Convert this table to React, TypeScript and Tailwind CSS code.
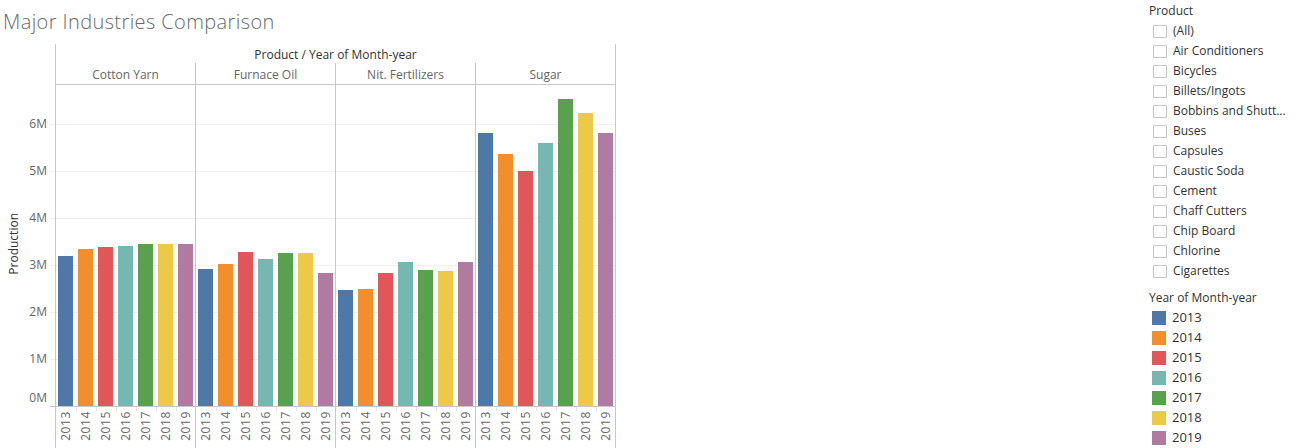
import React from "react";

const years = ["2013", "2014", "2015", "2016", "2017", "2018", "2019"];
const colors = ["#4e79a7", "#f28e2b", "#e15759", "#76b7b2", "#59a14f", "#edc948", "#b07aa1"];

const panels = [
  { name: "Cotton Yarn", h: [150, 157, 159, 160, 162, 162, 162] },
  { name: "Furnace Oil", h: [137, 142, 154, 147, 153, 153, 133] },
  { name: "Nit. Fertilizers", h: [116, 117, 133, 144, 136, 135, 144] },
  { name: "Sugar", h: [273, 252, 235, 263, 307, 293, 273] },
];

const grid = [
  { label: "6M", top: 39 },
  { label: "5M", top: 86 },
  { label: "4M", top: 133 },
  { label: "3M", top: 180 },
  { label: "2M", top: 227 },
  { label: "1M", top: 274 },
];

const products = [
  "(All)",
  "Air Conditioners",
  "Bicycles",
  "Billets/Ingots",
  "Bobbins and Shutt...",
  "Buses",
  "Capsules",
  "Caustic Soda",
  "Cement",
  "Chaff Cutters",
  "Chip Board",
  "Chlorine",
  "Cigarettes",
];

export default function App() {
  return (
    <div className="flex w-[1300px] h-[448px] overflow-hidden bg-white font-['Open_Sans',sans-serif]">
      {/* Chart */}
      <div className="w-[616px] flex flex-col shrink-0">
        <div className="h-[44px] pl-[3px] flex items-center text-[20px] font-light text-[#6a6a6a] tracking-[0.4px]">
          Major Industries Comparison
        </div>

        {/* header title row */}
        <div className="flex h-[19px]">
          <div className="w-[55px] shrink-0" />
          <div className="w-[561px] border-x border-[#c8c8c8] pt-[3px] text-center text-[12px] leading-[16px] text-[#333]">
            Product / Year of Month-year
          </div>
        </div>

        {/* panel headers */}
        <div className="flex h-[22px]">
          <div className="w-[55px] shrink-0" />
          <div className="w-[561px] flex border-r border-b border-[#c8c8c8]">
            {panels.map((p) => (
              <div
                key={p.name}
                className="w-[140px] border-l border-[#c8c8c8] flex items-center justify-center pt-[3px] text-[12px] text-[#666]"
              >
                {p.name}
              </div>
            ))}
          </div>
        </div>

        {/* plot */}
        <div className="relative flex h-[322px]">
          {grid.map((g) => (
            <div
              key={g.label}
              className="absolute left-[50px] right-0 h-px bg-[#f0f0f0]"
              style={{ top: g.top }}
            />
          ))}
          <div className="absolute left-[50px] w-[5px] bottom-0 h-px bg-[#c8c8c8]" />
          <div className="relative w-[55px] shrink-0 text-[12px] text-[#666]">
            {grid.map((g) => (
              <div
                key={g.label}
                className="absolute right-[8px] leading-[16px]"
                style={{ top: g.top - 8 }}
              >
                {g.label}
              </div>
            ))}
            <div className="absolute right-[8px] leading-[16px] top-[305px]">0M</div>
            <div className="absolute left-[6px] top-[128px] text-[12px] text-[#333] leading-[16px] [writing-mode:vertical-rl] rotate-180">
              Production
            </div>
          </div>
          <div className="relative w-[561px] flex border-r border-b border-[#c8c8c8]">
            {panels.map((p) => (
              <div
                key={p.name}
                className="w-[140px] h-full border-l border-[#c8c8c8] flex items-end gap-[5px] pl-[2px]"
              >
                {p.h.map((h, i) => (
                  <div
                    key={i}
                    className="w-[15px] shrink-0"
                    style={{ height: h, backgroundColor: colors[i] }}
                  />
                ))}
              </div>
            ))}
          </div>
        </div>

        {/* year labels */}
        <div className="flex h-[41px]">
          <div className="w-[55px] shrink-0" />
          <div className="w-[561px] flex border-r border-[#c8c8c8]">
            {panels.map((p) => (
              <div key={p.name} className="w-[140px] border-l border-[#c8c8c8] flex">
                {years.map((y, i) => (
                  <div
                    key={y}
                    className={`${i === 6 ? "w-[19px]" : "w-[20px]"} flex flex-col items-center`}
                  >
                    <div
                      className={`self-start h-[4px] w-px ${i === 0 ? "bg-transparent" : "bg-[#e4e4e4]"}`}
                    />
                    <span className="text-[12px] leading-[14px] text-[#666] [writing-mode:vertical-rl] rotate-180 tracking-[0.6px]">
                      {y}
                    </span>
                  </div>
                ))}
              </div>
            ))}
          </div>
        </div>
      </div>

      <div className="flex-1" />

      {/* Right side filters/legend */}
      <div className="w-[151px] shrink-0 flex flex-col text-[12px] text-[#333]">
        <div className="h-[21px] flex items-center">Product</div>
        {products.map((p) => (
          <div key={p} className="h-[20px] flex items-center whitespace-nowrap">
            <div className="ml-[4px] w-[14px] h-[13px] border border-[#c8c8c8] bg-white shrink-0" />
            <span className="ml-[6px]">{p}</span>
          </div>
        ))}
        <div className="h-[7px]" />
        <div className="h-[20px] flex items-center">Year of Month-year</div>
        {years.map((y, i) => (
          <div key={y} className="h-[20px] flex items-center">
            <div
              className="ml-[3px] w-[14px] h-[14px] shrink-0"
              style={{ backgroundColor: colors[i] }}
            />
            <span className="ml-[6px] text-[13px]">{y}</span>
          </div>
        ))}
      </div>
    </div>
  );
}
